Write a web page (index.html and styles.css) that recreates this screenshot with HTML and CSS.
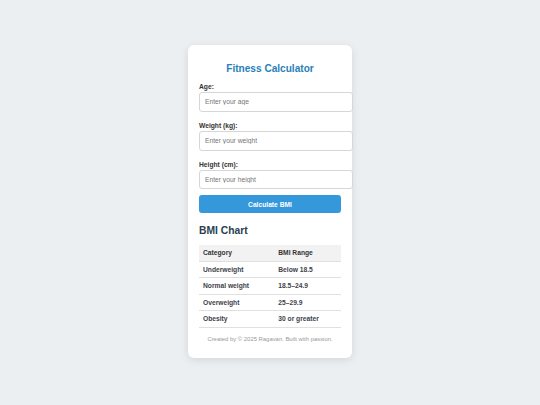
FILE: index.html
```html
<!DOCTYPE html>
<html lang="en">
<head>
<meta charset="utf-8">
<title>Fitness Calculator</title>
<link rel="stylesheet" href="styles.css">
</head>
<body>
<div class="card">
  <h1 class="title">Fitness Calculator</h1>
  <form class="form">
    <label class="label" for="age">Age:</label>
    <input class="input" id="age" type="text" placeholder="Enter your age">
    <label class="label" for="weight">Weight (kg):</label>
    <input class="input" id="weight" type="text" placeholder="Enter your weight">
    <label class="label" for="height">Height (cm):</label>
    <input class="input" id="height" type="text" placeholder="Enter your height">
    <button class="button" type="button">Calculate BMI</button>
  </form>
  <h2 class="chart-title">BMI Chart</h2>
  <table class="chart">
    <thead>
      <tr><th class="col1">Category</th><th>BMI Range</th></tr>
    </thead>
    <tbody>
      <tr><td>Underweight</td><td>Below 18.5</td></tr>
      <tr><td>Normal weight</td><td>18.5–24.9</td></tr>
      <tr><td>Overweight</td><td>25–29.9</td></tr>
      <tr><td>Obesity</td><td>30 or greater</td></tr>
    </tbody>
  </table>
  <p class="footer">Created by © 2025 Ragavan. Built with passion.</p>
</div>
</body>
</html>
```
FILE: styles.css
```css
html, body {
  margin: 0;
  padding: 0;
}
body {
  background: #ebeff1;
  font-family: "Liberation Sans", Arial, sans-serif;
  font-size: 6.7px;
  color: #333;
  display: flex;
  justify-content: center;
  align-items: flex-start;
  min-height: 405px;
}
.card {
  margin-top: 45px;
  width: 142px;
  padding: 11px 11px 15px;
  background: #fff;
  border-radius: 6px;
  box-shadow: 0 2px 8px rgba(0, 0, 0, 0.1);
}
.title {
  margin: 7px 0 8.5px;
  text-align: center;
  font-size: 10.1px;
  font-weight: bold;
  color: #2980b9;
  line-height: 11.5px;
}
.form {
  display: flex;
  flex-direction: column;
}
.label {
  display: block;
  font-weight: bold;
  color: #333;
  line-height: 7.7px;
  margin-bottom: 1.4px;
}
.input {
  width: 100%;
  box-sizing: content-box;
  font-family: inherit;
  font-size: 6.7px;
  line-height: 7.7px;
  height: 7.7px;
  padding: 5px;
  border: 1px solid #d6d6d6;
  border-radius: 3px;
  margin: 0 0 10px;
  color: #333;
  background: #fff;
  outline: none;
}
.input::placeholder {
  color: #767676;
}
.input:last-of-type {
  margin-bottom: 6px;
}
.button {
  width: 100%;
  height: 18px;
  border: none;
  border-radius: 3px;
  background: #3498db;
  color: #fff;
  font-family: inherit;
  font-size: 6.7px;
  font-weight: bold;
  padding: 0;
}
.chart-title {
  margin: 12px 0 8px;
  font-size: 10.3px;
  line-height: 11.5px;
  font-weight: bold;
  color: #2c3e50;
}
.chart {
  width: 100%;
  border-collapse: collapse;
  font-weight: bold;
  color: #3d4249;
}
.chart th, .chart td {
  text-align: left;
  padding: 0 4px;
  border-bottom: 1px solid #e0e0e0;
  line-height: 7.7px;
}
.chart th {
  background: #f2f2f2;
  height: 16px;
  color: #333;
}
.chart td {
  height: 15.5px;
}
.col1 {
  width: 53%;
}
.footer {
  margin: 8.6px 0 0;
  text-align: center;
  font-size: 5.9px;
  line-height: 6.8px;
  color: #999;
}
```
